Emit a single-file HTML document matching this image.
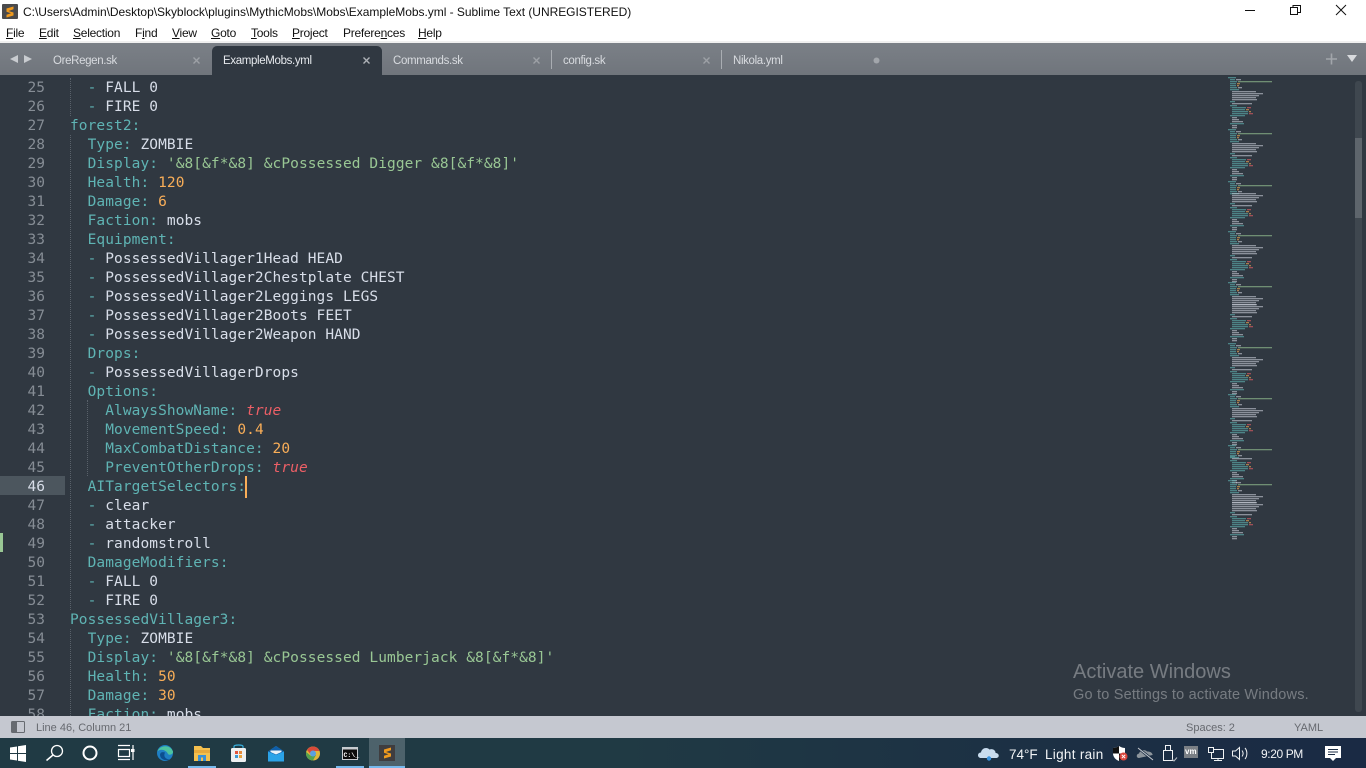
<!DOCTYPE html>
<html lang="en"><head><meta charset="utf-8"><title>ExampleMobs.yml - Sublime Text</title>
<style>
html,body{margin:0;padding:0;width:1366px;height:768px;overflow:hidden;background:#303841}
body{position:relative;font-family:"Liberation Sans",sans-serif}
.a{position:absolute;white-space:pre}
#title{left:0;top:0;width:1366px;height:41px;background:#fff}
#titleline{left:0;top:41px;width:1366px;height:2px;background:#f0f0f0}
.menu{top:26px;font-size:12px;line-height:14px;color:#111;letter-spacing:-.25px}
.menu u{text-decoration:underline}
#tabbar{left:0;top:43px;width:1366px;height:32px;background:linear-gradient(#7b8087,#70757c)}
.tab{top:54px;font-size:11.5px;letter-spacing:-.35px;line-height:14px;color:#d8dbdf}
.sep{top:50px;width:1px;height:19px;background:#a9adb2}
#active{left:212px;top:46px;width:170px;height:29px;background:#303841;border-radius:5px 5px 0 0}
#editor{left:0;top:75px;width:1366px;height:641px;overflow:hidden;background:#303841}
.l{position:absolute;left:70px;height:19px;line-height:19px;font-family:"DejaVu Sans Mono",monospace;font-size:14.5px;letter-spacing:.075px;color:#d8dee9;white-space:pre;transform:translateY(1px)}
.n{position:absolute;left:0;width:45px;text-align:right;height:19px;line-height:19px;font-family:"DejaVu Sans Mono",monospace;font-size:14.5px;color:#868d95;transform:translateY(1px)}
.k{color:#5fb4b4}.s{color:#99c794}.o{color:#f9ae58}.t{color:#ec5f66;font-style:italic}.p{color:#5fb4b4}
.g{position:absolute;width:0;border-left:1px dotted #59616a}
#status{left:0;top:716px;width:1366px;height:22px;background:#c5c8d0}
.st{top:722px;font-size:11px;line-height:13px;color:#66696f}
#task{left:0;top:738px;width:1366px;height:30px;background:linear-gradient(90deg,#203a44 0%,#203a44 45%,#1c3044 75%,#1a2a44 100%)}
.wm{color:rgba(255,255,255,.34)}
.tb{top:746px;font-size:13.5px;line-height:17px;color:#f2f4f6}
</style></head><body>
<div class="a" id="title"></div><div class="a" id="titleline"></div>
<svg class="a" style="left:2px;top:4px" width="16" height="15" viewBox="0 0 16 15"><rect width="16" height="15" rx="1" fill="#4a4a4c"/><path d="M11.500 2.500V5.300L6.500 7 11.500 8.500V11.500L4.500 13.500V10.700L9 9.200 4.500 7.800V4.500Z" fill="#f09a1e"/></svg>
<div class="a" style="left:23px;top:5px;font-size:12px;line-height:14px;color:#111;letter-spacing:-.03px">C:\Users\Admin\Desktop\Skyblock\plugins\MythicMobs\Mobs\ExampleMobs.yml - Sublime Text (UNREGISTERED)</div>
<svg class="a" style="left:1240px;top:0" width="126" height="20" viewBox="0 0 126 20" fill="none" stroke="#111" stroke-width="1"><path d="M5 10.500H15"/><path d="M50.500 7.500h7v7h-7zM53 7.500V5.500h7.500v7H57.500"/><path d="M96 5 106 15M106 5 96 15"/></svg>
<div class="a menu" style="left:6px"><u>F</u>ile</div>
<div class="a menu" style="left:39px"><u>E</u>dit</div>
<div class="a menu" style="left:73px"><u>S</u>election</div>
<div class="a menu" style="left:135px">F<u>i</u>nd</div>
<div class="a menu" style="left:172px"><u>V</u>iew</div>
<div class="a menu" style="left:211px"><u>G</u>oto</div>
<div class="a menu" style="left:251px"><u>T</u>ools</div>
<div class="a menu" style="left:292px"><u>P</u>roject</div>
<div class="a menu" style="left:343px">Prefere<u>n</u>ces</div>
<div class="a menu" style="left:418px"><u>H</u>elp</div>

<div class="a" id="tabbar"></div>
<svg class="a" style="left:9px;top:53px" width="24" height="12" viewBox="0 0 24 12" fill="#c9ccd0"><path d="M1 6 9 2V10Z"/><path d="M15 2 23 6 15 10Z"/></svg>
<div class="a tab" style="left:53px">OreRegen.sk</div>
<div class="a" id="active"></div>
<div class="a tab" style="left:223px;color:#e6e9ed">ExampleMobs.yml</div>
<div class="a tab" style="left:393px">Commands.sk</div>
<div class="a sep" style="left:551px"></div>
<div class="a tab" style="left:563px">config.sk</div>
<div class="a sep" style="left:721px"></div>
<div class="a tab" style="left:733px">Nikola.yml</div>
<svg class="a" style="left:0;top:50px" width="900" height="20" viewBox="0 0 900 20" fill="none" stroke="#9da1a6" stroke-width="1.400">
<path d="M193.500 7.500 199.500 13.500M199.500 7.500 193.500 13.500"/>
<path d="M363.500 7.500 369.500 13.500M369.500 7.500 363.500 13.500" stroke="#aeb2b7"/>
<path d="M533.500 7.500 539.500 13.500M539.500 7.500 533.500 13.500"/>
<path d="M703.500 7.500 709.500 13.500M709.500 7.500 703.500 13.500"/>
<circle cx="876.500" cy="10.500" r="3" fill="#a2a6ab" stroke="none"/>
</svg>
<svg class="a" style="left:1326px;top:52px" width="32" height="14" viewBox="0 0 32 14"><path d="M0 7H11M5.500 1.500V12.500" stroke="#a2a6ab" stroke-width="1.600" fill="none"/><path d="M21 3H31L26 10Z" fill="#d8dadd"/></svg>

<div class="a" id="editor">
<div style="position:absolute;left:0;top:401px;width:65px;height:19px;background:#4c565e"></div>
<div style="position:absolute;left:0;top:458px;width:3px;height:19px;background:#99c794"></div>
<div class="g" style="left:70px;top:3px;height:38px"></div>
<div class="g" style="left:70px;top:60px;height:475px"></div>
<div class="g" style="left:70px;top:554px;height:87px"></div>
<div class="g" style="left:87px;top:325px;height:76px"></div>
<div style="position:absolute;left:245px;top:401px;width:2px;height:22px;background:#f9ae58"></div>

<div class="n" style="top:3px">25</div><div class="l" style="top:3px">  <span class="p">-</span> FALL 0</div>
<div class="n" style="top:22px">26</div><div class="l" style="top:22px">  <span class="p">-</span> FIRE 0</div>
<div class="n" style="top:41px">27</div><div class="l" style="top:41px"><span class="k">forest2:</span></div>
<div class="n" style="top:60px">28</div><div class="l" style="top:60px">  <span class="k">Type:</span> ZOMBIE</div>
<div class="n" style="top:79px">29</div><div class="l" style="top:79px">  <span class="k">Display:</span> <span class="s">'&amp;8[&amp;f*&amp;8] &amp;cPossessed Digger &amp;8[&amp;f*&amp;8]'</span></div>
<div class="n" style="top:98px">30</div><div class="l" style="top:98px">  <span class="k">Health:</span> <span class="o">120</span></div>
<div class="n" style="top:117px">31</div><div class="l" style="top:117px">  <span class="k">Damage:</span> <span class="o">6</span></div>
<div class="n" style="top:136px">32</div><div class="l" style="top:136px">  <span class="k">Faction:</span> mobs</div>
<div class="n" style="top:155px">33</div><div class="l" style="top:155px">  <span class="k">Equipment:</span></div>
<div class="n" style="top:174px">34</div><div class="l" style="top:174px">  <span class="p">-</span> PossessedVillager1Head HEAD</div>
<div class="n" style="top:193px">35</div><div class="l" style="top:193px">  <span class="p">-</span> PossessedVillager2Chestplate CHEST</div>
<div class="n" style="top:212px">36</div><div class="l" style="top:212px">  <span class="p">-</span> PossessedVillager2Leggings LEGS</div>
<div class="n" style="top:231px">37</div><div class="l" style="top:231px">  <span class="p">-</span> PossessedVillager2Boots FEET</div>
<div class="n" style="top:250px">38</div><div class="l" style="top:250px">  <span class="p">-</span> PossessedVillager2Weapon HAND</div>
<div class="n" style="top:269px">39</div><div class="l" style="top:269px">  <span class="k">Drops:</span></div>
<div class="n" style="top:288px">40</div><div class="l" style="top:288px">  <span class="p">-</span> PossessedVillagerDrops</div>
<div class="n" style="top:307px">41</div><div class="l" style="top:307px">  <span class="k">Options:</span></div>
<div class="n" style="top:326px">42</div><div class="l" style="top:326px">    <span class="k">AlwaysShowName:</span> <span class="t">true</span></div>
<div class="n" style="top:345px">43</div><div class="l" style="top:345px">    <span class="k">MovementSpeed:</span> <span class="o">0.4</span></div>
<div class="n" style="top:364px">44</div><div class="l" style="top:364px">    <span class="k">MaxCombatDistance:</span> <span class="o">20</span></div>
<div class="n" style="top:383px">45</div><div class="l" style="top:383px">    <span class="k">PreventOtherDrops:</span> <span class="t">true</span></div>
<div class="n" style="top:402px;color:#d8dee9">46</div><div class="l" style="top:402px">  <span class="k">AITargetSelectors:</span></div>
<div class="n" style="top:421px">47</div><div class="l" style="top:421px">  <span class="p">-</span> clear</div>
<div class="n" style="top:440px">48</div><div class="l" style="top:440px">  <span class="p">-</span> attacker</div>
<div class="n" style="top:459px">49</div><div class="l" style="top:459px">  <span class="p">-</span> randomstroll</div>
<div class="n" style="top:478px">50</div><div class="l" style="top:478px">  <span class="k">DamageModifiers:</span></div>
<div class="n" style="top:497px">51</div><div class="l" style="top:497px">  <span class="p">-</span> FALL 0</div>
<div class="n" style="top:516px">52</div><div class="l" style="top:516px">  <span class="p">-</span> FIRE 0</div>
<div class="n" style="top:535px">53</div><div class="l" style="top:535px"><span class="k">PossessedVillager3:</span></div>
<div class="n" style="top:554px">54</div><div class="l" style="top:554px">  <span class="k">Type:</span> ZOMBIE</div>
<div class="n" style="top:573px">55</div><div class="l" style="top:573px">  <span class="k">Display:</span> <span class="s">'&amp;8[&amp;f*&amp;8] &amp;cPossessed Lumberjack &amp;8[&amp;f*&amp;8]'</span></div>
<div class="n" style="top:592px">56</div><div class="l" style="top:592px">  <span class="k">Health:</span> <span class="o">50</span></div>
<div class="n" style="top:611px">57</div><div class="l" style="top:611px">  <span class="k">Damage:</span> <span class="o">30</span></div>
<div class="n" style="top:630px">58</div><div class="l" style="top:630px">  <span class="k">Faction:</span> mobs</div>
</div>

<svg class="a" style="left:1220px;top:75px" width="146" height="641" viewBox="1220 75 146 641">
<defs>
<filter id="bl" x="-5%" y="-5%" width="110%" height="110%"><feGaussianBlur stdDeviation=".35"/></filter>
<g id="hd" opacity=".6">
<rect x="1228" y="0" width="8" height="1.300" fill="#5fb4b4"/>
<rect x="1230" y="2" width="5" height="1.300" fill="#5fb4b4"/><rect x="1236" y="2" width="5" height="1.300" fill="#c8ced8"/>
<rect x="1230" y="4" width="7" height="1.300" fill="#5fb4b4"/><rect x="1238" y="4" width="34" height="1.300" fill="#99c794"/>
<rect x="1230" y="6" width="6" height="1.300" fill="#5fb4b4"/><rect x="1237" y="6" width="3" height="1.300" fill="#f9ae58"/>
<rect x="1230" y="8" width="6" height="1.300" fill="#5fb4b4"/><rect x="1237" y="8" width="2" height="1.300" fill="#f9ae58"/>
<rect x="1230" y="10" width="7" height="1.300" fill="#5fb4b4"/><rect x="1238" y="10" width="4" height="1.300" fill="#c8ced8"/>
<rect x="1230" y="12" width="9" height="1.300" fill="#5fb4b4"/>
</g>
<g id="eq" opacity=".6">
<rect x="1232" y="14" width="24" height="1.300" fill="#c8ced8"/>
<rect x="1232" y="16" width="31" height="1.300" fill="#c8ced8"/>
<rect x="1232" y="18" width="27" height="1.300" fill="#c8ced8"/>
<rect x="1232" y="20" width="24" height="1.300" fill="#c8ced8"/>
<rect x="1232" y="22" width="25" height="1.300" fill="#c8ced8"/>
</g>
<g id="tl" opacity=".6">
<rect x="1230" y="24" width="5" height="1.300" fill="#5fb4b4"/>
<rect x="1232" y="26" width="20" height="1.300" fill="#c8ced8"/>
<rect x="1230" y="28" width="7" height="1.300" fill="#5fb4b4"/>
<rect x="1232" y="30" width="14" height="1.300" fill="#5fb4b4"/><rect x="1247" y="30" width="4" height="1.300" fill="#ec5f66"/>
<rect x="1232" y="32" width="13" height="1.300" fill="#5fb4b4"/><rect x="1246" y="32" width="3" height="1.300" fill="#f9ae58"/>
<rect x="1232" y="34" width="16" height="1.300" fill="#5fb4b4"/><rect x="1249" y="34" width="2" height="1.300" fill="#f9ae58"/>
<rect x="1232" y="36" width="16" height="1.300" fill="#5fb4b4"/><rect x="1249" y="36" width="4" height="1.300" fill="#ec5f66"/>
<rect x="1230" y="38" width="15" height="1.300" fill="#5fb4b4"/>
<rect x="1232" y="40" width="5" height="1.300" fill="#c8ced8"/>
<rect x="1232" y="42" width="7" height="1.300" fill="#c8ced8"/>
<rect x="1232" y="44" width="11" height="1.300" fill="#c8ced8"/>
<rect x="1230" y="46" width="14" height="1.300" fill="#5fb4b4"/>
<rect x="1232" y="48" width="5" height="1.300" fill="#c8ced8"/>
<rect x="1232" y="50" width="5" height="1.300" fill="#c8ced8"/>
</g>
</defs>
<g filter="url(#bl)">
<use href="#hd" y="77"/><use href="#eq" y="77"/><use href="#tl" y="77"/>
<use href="#hd" y="129"/><use href="#eq" y="129"/><use href="#tl" y="129"/>
<use href="#hd" y="181"/><use href="#eq" y="179"/><use href="#tl" y="179"/>
<use href="#hd" y="231"/><use href="#eq" y="231"/><use href="#tl" y="231"/>
<use href="#hd" y="282"/><use href="#eq" y="282"/><use href="#eq" y="290"/><use href="#tl" y="290"/>
<use href="#hd" y="343"/><use href="#eq" y="343"/><use href="#tl" y="343"/>
<use href="#hd" y="394"/><use href="#eq" y="394"/><use href="#tl" y="394"/>
<use href="#hd" y="445"/><use href="#tl" y="432"/>
<use href="#hd" y="480"/><use href="#eq" y="480"/><use href="#eq" y="488"/><use href="#tl" y="488"/>
</g>
<rect x="1355" y="81" width="7" height="631" rx="3" fill="#3f474f"/>
<rect x="1355" y="138" width="7" height="80" fill="#5e656c"/>
</svg>

<div class="a wm" style="left:1073px;top:661px;font-size:20px;line-height:23px">Activate Windows</div>
<div class="a wm" style="left:1073px;top:686px;font-size:14.5px;letter-spacing:.2px;line-height:18px">Go to Settings to activate Windows.</div>

<div class="a" id="status"></div>
<svg class="a" style="left:11px;top:720px" width="15" height="14" viewBox="0 0 15 14"><rect x=".5" y="1.500" width="13" height="11" rx="1" fill="none" stroke="#666a70"/><rect x="1" y="2" width="5" height="10" fill="#666a70"/></svg>
<div class="a st" style="left:36px">Line 46, Column 21</div>
<div class="a st" style="left:1186px">Spaces: 2</div>
<div class="a st" style="left:1294px">YAML</div>

<div class="a" id="task"></div>
<div class="a" style="left:369px;top:738px;width:36px;height:30px;background:#4d626b"></div>
<div class="a" style="left:188px;top:766px;width:28px;height:2px;background:#76b9ed"></div>
<div class="a" style="left:336px;top:766px;width:28px;height:2px;background:#76b9ed"></div>
<div class="a" style="left:369px;top:766px;width:36px;height:2px;background:#76b9ed"></div>

<svg class="a" style="left:0;top:738px" width="420" height="30" viewBox="0 0 420 30">
<path d="M10 9.500 17 8.500V15H10ZM18 8.300 26 7V15H18ZM10 16H17V22.500L10 21.500ZM18 16H26V24L18 22.700Z" fill="#fff"/>
<circle cx="57" cy="13" r="5.500" fill="none" stroke="#fff" stroke-width="1.300"/><path d="M53 17 46.500 22.500" stroke="#fff" stroke-width="1.500" fill="none"/>
<circle cx="90" cy="15" r="6.500" fill="none" stroke="#fff" stroke-width="2"/>
<path d="M118 7.500H130M118 21.500H130M118.500 11.500H129.500V18.500H118.500ZM133 7V22" stroke="#fff" stroke-width="1.200" fill="none"/><rect x="131" y="11" width="3.500" height="3" fill="#fff"/>
<circle cx="165" cy="15" r="8" fill="#1e7fc4"/><path d="M157.500 13.500C159 7.500 170 5.500 173 13.500 173.500 16.500 169 17.500 168 16 166 11.500 160 10.500 157.500 13.500Z" fill="#4cc3a0"/><path d="M160 16.500C160 21.500 166 23.500 170 21.500 166 21.500 163 18.500 165 14.500 162 13.500 160.500 14.500 160 16.500Z" fill="#0c4f8f"/>
<path d="M194 8H201L203 10H210V23H194Z" fill="#f4c04e"/><rect x="194" y="12" width="16" height="3" fill="#e8a93a"/><path d="M198 23V17H206V23H203V19.500H201V23Z" fill="#3a8fd4"/>
<path d="M234 11V8.500C234 6.500 243 6.500 243 8.500V11" fill="none" stroke="#38b0de" stroke-width="1.200"/><rect x="231" y="10" width="15" height="14" rx="1.500" fill="#eef0f1"/><rect x="235" y="13" width="3" height="3" fill="#e2553d"/><rect x="239" y="13" width="3" height="3" fill="#e58a3c"/><rect x="235" y="17" width="3" height="3" fill="#3b9bd6"/><rect x="239" y="17" width="3" height="3" fill="#e8a23c"/>
<path d="M268 13.500 276 8 284 13.500V23.500H268Z" fill="#2ba3e8"/><path d="M268 13.500 276 8 284 13.500 276 17Z" fill="#0f5ea8"/><path d="M270.500 12.500H281.500V14L276 16.500 270.500 14Z" fill="#e8f2fa"/>
<circle cx="313" cy="15.500" r="7" fill="#e0b63a"/><path d="M307 12A7 7 0 0 1 319.500 13H313A3 3 0 0 0 310 15.500Z" fill="#d94a3a"/><path d="M306.200 14A7 7 0 0 0 313 22.500L316 17 311 18Z" fill="#55a24f"/><circle cx="313" cy="15.500" r="3" fill="#5aa0e0"/>
<rect x="342.500" y="9.500" width="15" height="12" fill="#0c0c0c" stroke="#c8ccd0"/><rect x="342" y="9" width="16" height="2.500" fill="#c8ccd0"/>
<text x="343.500" y="19" font-family="Liberation Mono,monospace" font-size="6.500" font-weight="700" fill="#fff">C:\_</text>
<rect x="379" y="7" width="16" height="16" fill="#3f3d3f"/><path d="M391 9.500V12.300L386 14 391 15.500V18.500L384 20.500V17.700L388.500 16.200 384 14.800V11.500Z" fill="#f09a1e"/>
</svg>

<svg class="a" style="left:975px;top:738px" width="391" height="30" viewBox="0 0 391 30">
<path d="M6 20C2 20 2 14.500 6 14.500 6.500 10 12 8.500 14.500 11.500 18 10 21 13 20.500 15 24.500 15 25 20 21 20Z" fill="#c8dcee"/><circle cx="14" cy="20.500" r="2.200" fill="#3a93dd"/>
<path d="M144 8C141.500 9.500 139.500 10 138 10V15.500C138 19 141 22 144 23 147 22 150 19 150 15.500V10C148.500 10 146.500 9.500 144 8Z" fill="#fff"/><path d="M144 8V15.500H138V10C139.500 10 141.500 9.500 144 8ZM144 15.500H150C150 19 147 22 144 23Z" fill="#111"/><circle cx="148.500" cy="18.500" r="4" fill="#d9453d"/><path d="M146.800 16.800 150.200 20.200M150.200 16.800 146.800 20.200" stroke="#fff"/>
<g transform="translate(-15,0)"><path d="M179 20C176 20 176 16 179 15.500 180 12 185 11 187 13.500 191 13 193 16 192.500 17 194 20 192 20Z" fill="#8d959c"/><path d="M178 10 193 22" stroke="#1c2d44" stroke-width="2.500"/><path d="M178 10 193 22" stroke="#c6cbcf" stroke-width="1"/></g>
<path d="M190.500 12.500V7.500H195.500V12.500M188.500 12.500H197.500V22.500H188.500Z" fill="none" stroke="#f0f2f4"/><path d="M197 21 199 23 202 19.500" stroke="#b8bec4" fill="none"/>
<rect x="209" y="8" width="14" height="12" fill="#7a7f85"/><text x="210" y="16" font-family="Liberation Sans,sans-serif" font-size="8" font-weight="700" fill="#fff">vm</text>
<path d="M233.500 9.500H238.500V14.500H233.500ZM238.500 11.500H248.500V20.500H236.500V14.500M243 20.500V22.500M239 22.500H247" fill="none" stroke="#f0f2f4"/>
<path d="M257.500 13H260.500L264.500 9.500V21.500L260.500 18H257.500Z" fill="none" stroke="#f0f2f4"/><path d="M267 12.500C268.500 14.500 268.500 16.500 267 18.500M270 10C272.500 13 272.500 18 270 21" fill="none" stroke="#f0f2f4"/>
<path d="M350 8H366V20H361L358 23 355 20H350Z" fill="#fff"/><path d="M353 11.500H363M353 14H363M353 16.500H360" stroke="#1c2d44"/>
</svg>
<div class="a tb" style="left:1009px">74°F</div>
<div class="a tb" style="left:1045px;letter-spacing:.3px">Light rain</div>
<div class="a tb" style="left:1261px;font-size:12px;letter-spacing:-.4px">9:20 PM</div>
</body></html>
